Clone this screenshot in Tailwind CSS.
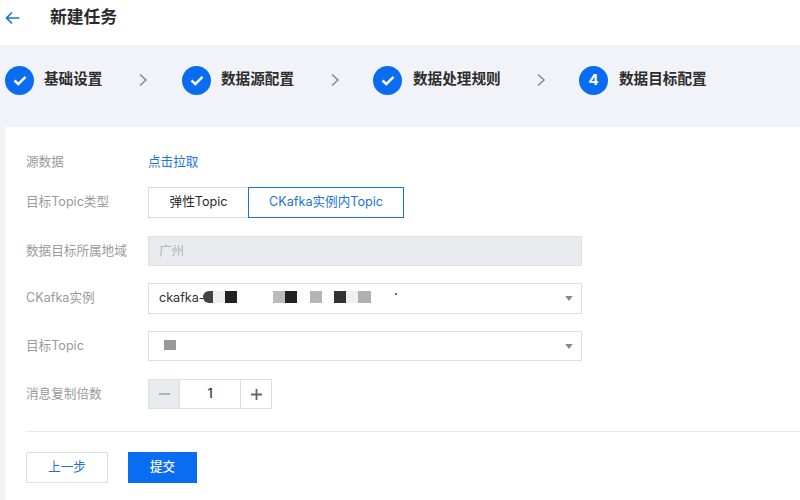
<!DOCTYPE html>
<html lang="zh-CN">
<head>
    <meta charset="UTF-8">
    <title>新建任务</title>
    <script src="https://cdn.jsdelivr.net/npm/@tailwindcss/browser@4"></script>
</head>
<body class="w-[800px] h-[500px] overflow-hidden bg-white font-['Inter','Noto_Sans_CJK_SC',sans-serif] text-[13px] text-[#222]">
    <!-- Header -->
    <div class="h-[45px] flex items-center">
        <svg class="ml-[5px] mt-[-9px]" width="15" height="14" viewBox="0 0 15 14" fill="none" stroke="#1a73d9" stroke-width="1.7"><path d="M14.5 7H1.5M7 1.5 1.5 7 7 12.5"/></svg>
        <div class="ml-[30px] mt-[-9px] text-[16.8px] font-semibold text-[#2a2a2a]">新建任务</div>
    </div>

    <!-- Steps -->
    <div class="h-[82px] bg-[#f1f3f8] flex items-center pl-[5px] pb-[12px] text-[14.6px] font-semibold text-[#2e2e2e]">
        <div class="w-[29px] h-[29px] rounded-full bg-[#0a6cf0] flex items-center justify-center">
            <svg width="14" height="11" viewBox="0 0 14 11" fill="none" stroke="white" stroke-width="2.4"><path d="M1.5 5.5 5.3 9 12.5 1.8"/></svg>
        </div>
        <div class="ml-[10px] w-[60px] whitespace-nowrap">基础设置</div>
        <svg class="ml-[34px]" width="10" height="14" viewBox="0 0 10 14" fill="none" stroke="#8a8a8a" stroke-width="1.6"><path d="M2 1.5 8 7 2 12.5"/></svg>
        <div class="ml-[34px] w-[29px] h-[29px] rounded-full bg-[#0a6cf0] flex items-center justify-center">
            <svg width="14" height="11" viewBox="0 0 14 11" fill="none" stroke="white" stroke-width="2.4"><path d="M1.5 5.5 5.3 9 12.5 1.8"/></svg>
        </div>
        <div class="ml-[10px] w-[74px] whitespace-nowrap">数据源配置</div>
        <svg class="ml-[35px]" width="10" height="14" viewBox="0 0 10 14" fill="none" stroke="#8a8a8a" stroke-width="1.6"><path d="M2 1.5 8 7 2 12.5"/></svg>
        <div class="ml-[33px] w-[29px] h-[29px] rounded-full bg-[#0a6cf0] flex items-center justify-center">
            <svg width="14" height="11" viewBox="0 0 14 11" fill="none" stroke="white" stroke-width="2.4"><path d="M1.5 5.5 5.3 9 12.5 1.8"/></svg>
        </div>
        <div class="ml-[11px] w-[88px] whitespace-nowrap">数据处理规则</div>
        <svg class="ml-[35px]" width="10" height="14" viewBox="0 0 10 14" fill="none" stroke="#8a8a8a" stroke-width="1.6"><path d="M2 1.5 8 7 2 12.5"/></svg>
        <div class="ml-[33px] w-[29px] h-[29px] rounded-full bg-[#0a6cf0] flex items-center justify-center text-white text-[15px] font-bold">4</div>
        <div class="ml-[11px] whitespace-nowrap">数据目标配置</div>
    </div>

    <!-- Form card -->
    <div class="flex h-[373px]">
        <div class="w-[5px] bg-[#f1f3f8]"></div>
        <div class="flex-1 pl-[21px] text-[12.6px]">
            <div class="mt-[25px] h-[20px] flex items-center">
                <div class="w-[122px] text-[#9a9a9a]">源数据</div>
                <div class="text-[#1a73d9]">点击拉取</div>
            </div>

            <div class="mt-[15px] h-[31px] flex items-center">
                <div class="w-[122px] text-[#9a9a9a]">目标Topic类型</div>
                <div class="w-[100px] h-full border border-[#d8dade] border-r-0 flex items-center justify-center text-[#2a2a2a]">弹性Topic</div>
                <div class="w-[156px] h-full border-[1.5px] border-[#1a73d9] flex items-center justify-center text-[#1a73d9]">CKafka实例内Topic</div>
            </div>

            <div class="mt-[18px] h-[30px] flex items-center">
                <div class="w-[122px] text-[#9a9a9a]">数据目标所属地域</div>
                <div class="w-[434px] h-full bg-[#eaebef] border border-[#dfe1e6] flex items-center pl-[10px] text-[#b4b4b4]">广州</div>
            </div>

            <div class="mt-[17px] h-[31px] flex items-center">
                <div class="w-[122px] text-[#9a9a9a]">CKafka实例</div>
                <div class="w-[434px] h-full border-[1.5px] border-[#dcdee2] flex items-center pl-[10px] pr-[8px]">
                    <span class="w-[44px] text-[#333]">ckafka-</span>
                    <div class="flex h-[12px] mt-[-3px]">
                        <div class="w-[10px] bg-[#444] rounded-l-full"></div>
                        <div class="w-[12px] bg-[#eee]"></div>
                        <div class="w-[12px] bg-[#222]"></div>
                        <div class="ml-[36px] w-[12px] bg-[#bbb]"></div>
                        <div class="w-[12px] bg-[#222]"></div>
                        <div class="ml-[13px] w-[12px] bg-[#b5b5b5]"></div>
                        <div class="ml-[12px] w-[12px] bg-[#333]"></div>
                        <div class="w-[12px] bg-[#f0f0f0]"></div>
                        <div class="w-[13px] bg-[#b0b0b0]"></div>
                        <div class="ml-[24px] w-[2px] h-[2px] mt-[2px] bg-[#666]"></div>
                    </div>
                    <svg class="ml-auto" width="8" height="5" viewBox="0 0 9 6" fill="#888"><path d="M0 0h9L4.5 6z"/></svg>
                </div>
            </div>

            <div class="mt-[17px] h-[30px] flex items-center">
                <div class="w-[122px] text-[#9a9a9a]">目标Topic</div>
                <div class="w-[434px] h-full border-[1.5px] border-[#dcdee2] flex items-center pl-[15px] pr-[8px]">
                    <div class="w-[12px] h-[10px] bg-[#999] mt-[-2px]"></div>
                    <svg class="ml-auto" width="8" height="5" viewBox="0 0 9 6" fill="#888"><path d="M0 0h9L4.5 6z"/></svg>
                </div>
            </div>

            <div class="mt-[18px] h-[30px] flex items-center">
                <div class="w-[122px] text-[#9a9a9a]">消息复制倍数</div>
                <div class="w-[124px] h-full border-[1.5px] border-[#dcdee2] flex">
                    <div class="w-[31px] bg-[#eaebef] border-r border-[#dcdee2] flex items-center justify-center">
                        <svg width="11" height="2" fill="#b4b4b4"><rect width="11" height="2"/></svg>
                    </div>
                    <div class="w-[60px] flex items-center justify-center text-[#333] font-medium">1</div>
                    <div class="flex-1 border-l border-[#dcdee2] flex items-center justify-center">
                        <svg width="11" height="11" fill="#666"><path d="M4.6 0h1.8v4.6H11v1.8H6.4V11H4.6V6.4H0V4.6h4.6z"/></svg>
                    </div>
                </div>
            </div>

            <div class="mt-[22px] h-px bg-[#e8e9ec]"></div>

            <div class="mt-[20px] flex gap-[20px]">
                <div class="w-[82px] h-[31px] border-[1.5px] border-[#dcdee2] flex items-center justify-center text-[#1a73d9]">上一步</div>
                <div class="w-[69px] h-[31px] bg-[#0a6cf0] flex items-center justify-center text-white font-medium">提交</div>
            </div>
        </div>
    </div>
</body>
</html>
